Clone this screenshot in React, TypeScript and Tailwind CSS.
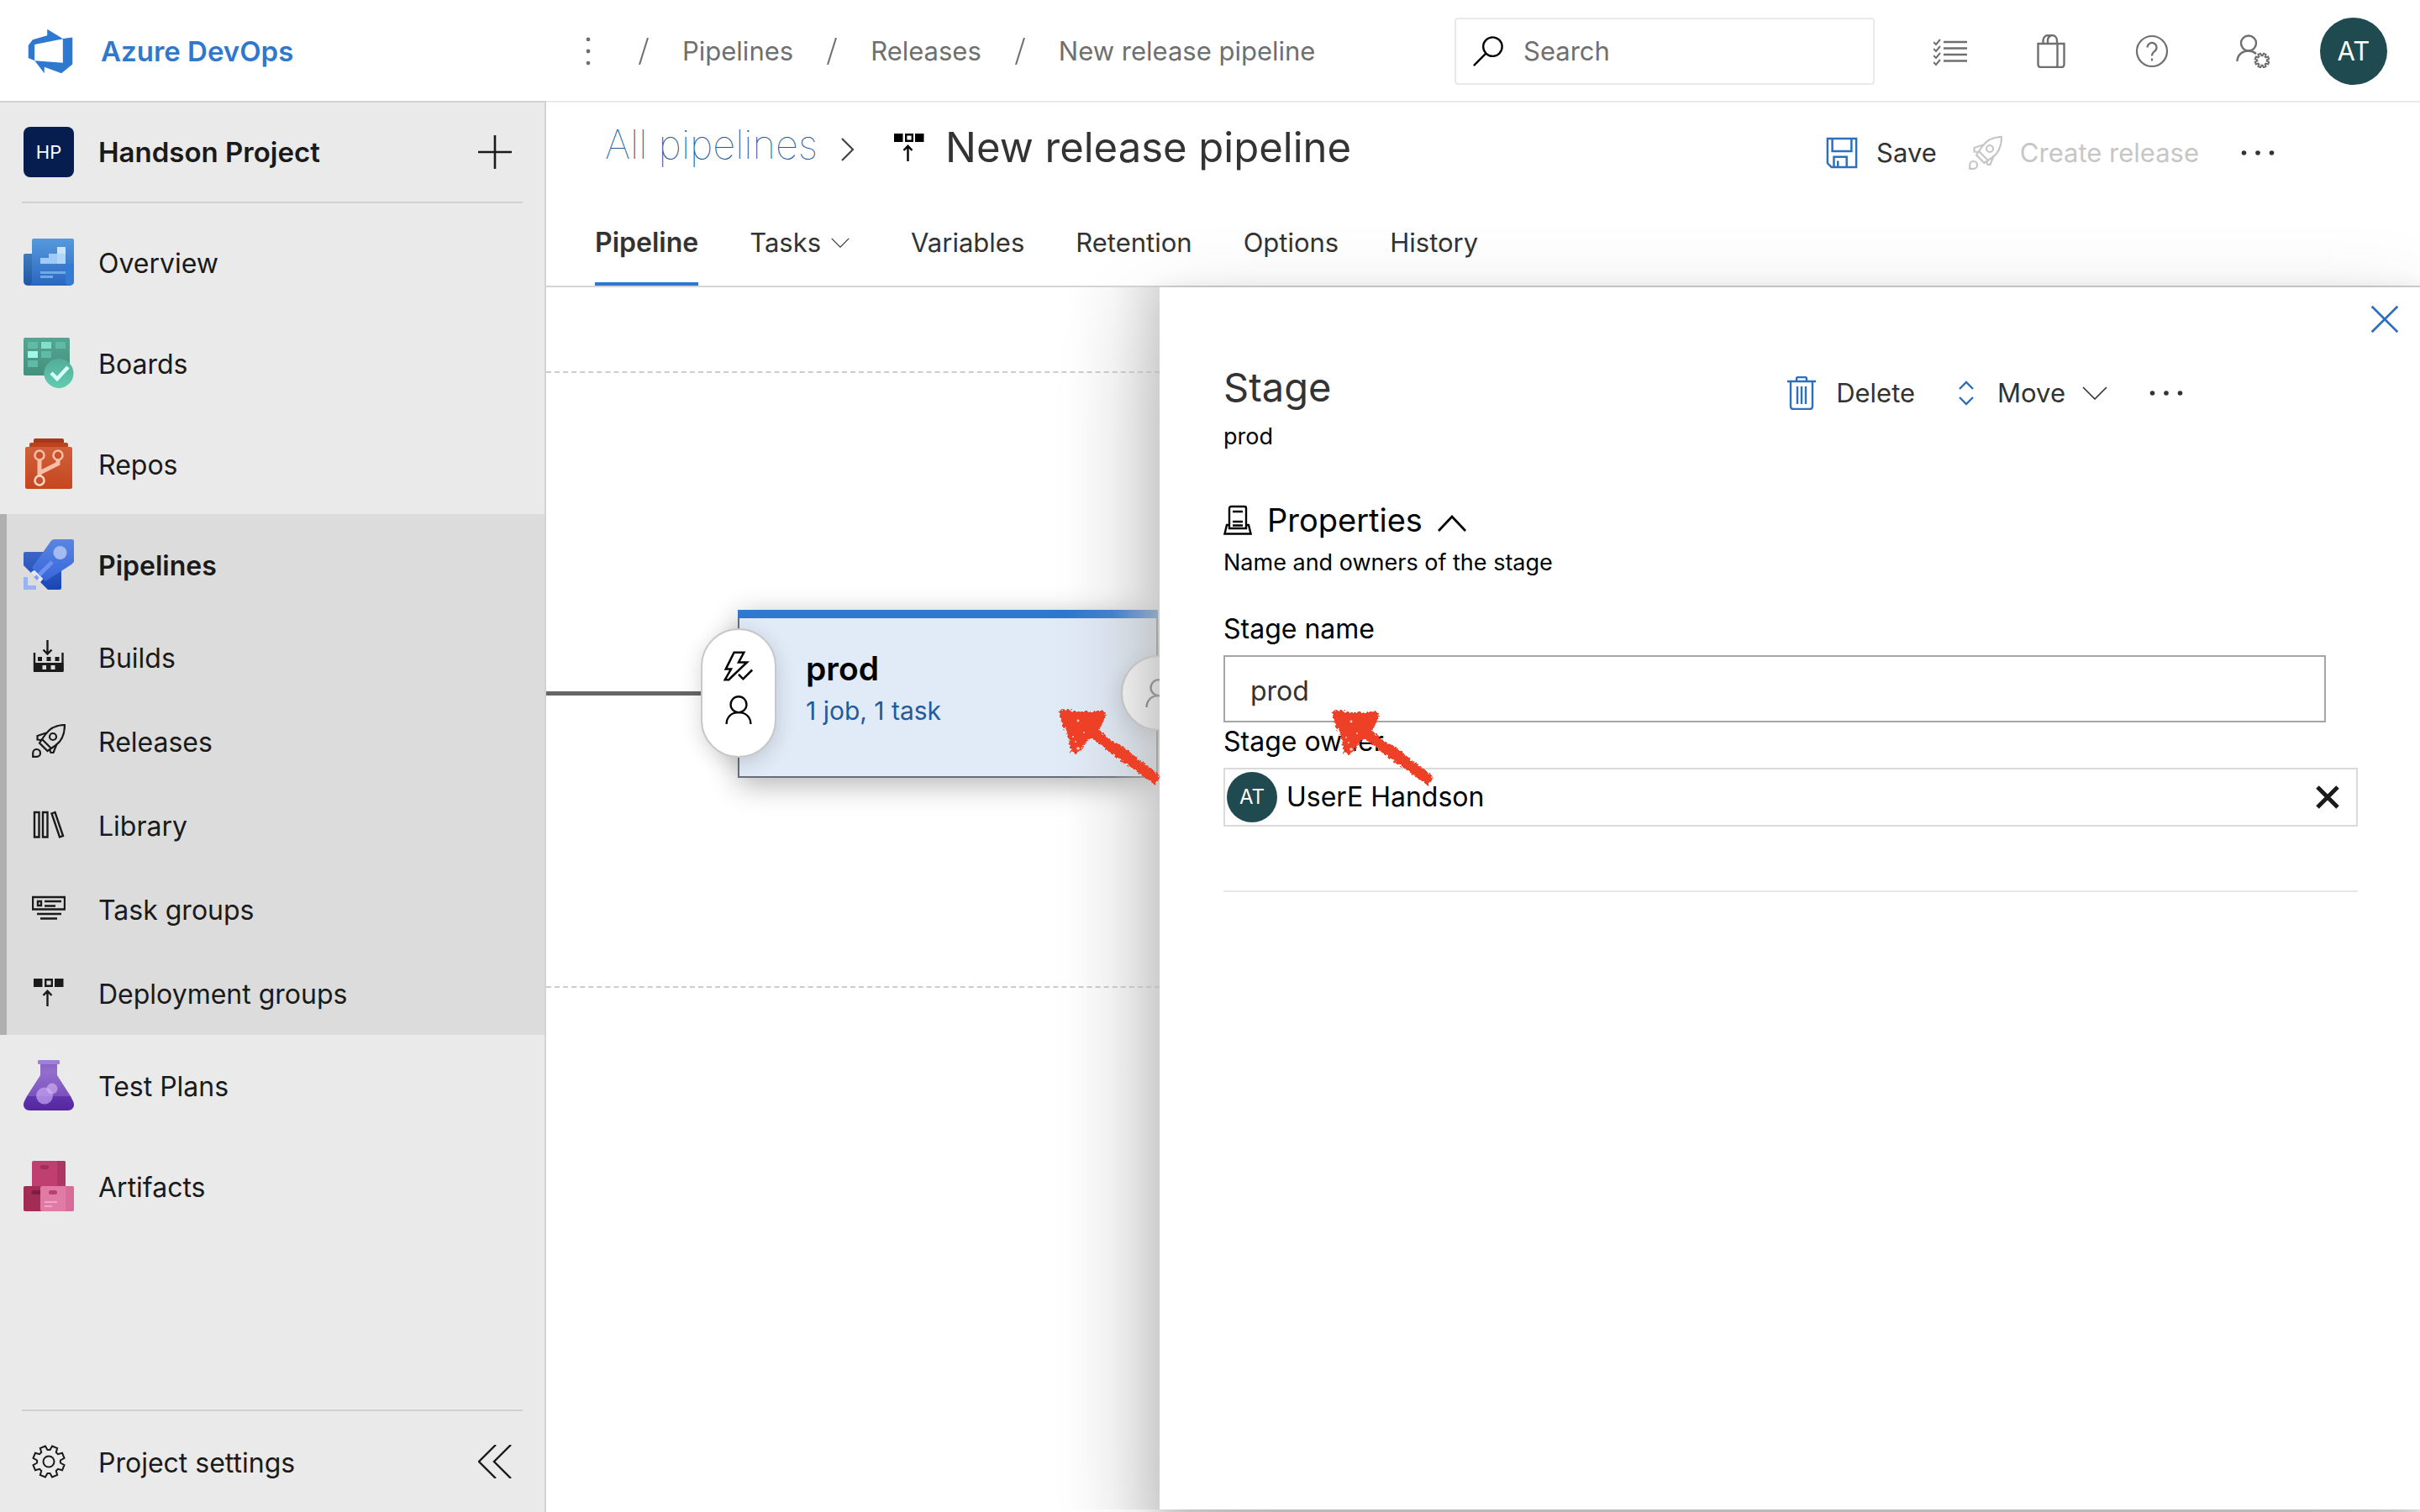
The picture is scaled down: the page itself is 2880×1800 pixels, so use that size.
import React, { type ReactNode } from "react";

/* ---------- icons ---------- */

type IconProps = { className?: string };

function Line({ className, box = "0 0 40 40", width = 2, children }: IconProps & { box?: string; width?: number; children: ReactNode }) {
  return (
    <svg viewBox={box} className={className} fill="none" stroke="currentColor" strokeWidth={width} aria-hidden="true">
      {children}
    </svg>
  );
}

function gearPath(cx: number, cy: number, outer: number, inner: number, teeth: number) {
  const pts: string[] = [];
  const step = (Math.PI * 2) / teeth;
  for (let i = 0; i < teeth; i++) {
    const c = step * (i + 0.5) - Math.PI / 2;
    const corners: [number, number][] = [
      [inner, -0.36],
      [outer, -0.22],
      [outer, 0.22],
      [inner, 0.36],
    ];
    for (const [r, t] of corners) {
      pts.push(`${(cx + r * Math.cos(c + t * step)).toFixed(2)} ${(cy + r * Math.sin(c + t * step)).toFixed(2)}`);
    }
  }
  return `M${pts.join("L")}Z`;
}

const DevOpsLogo = () => (
  <svg viewBox="0 0 16 16" className="size-[60px] text-[#2f78d0]" fill="currentColor" aria-hidden="true">
    <path d="M15 3.622v8.512L11.5 15l-5.425-1.975v1.958L3.004 10.97l8.951.7V4.005L15 3.622zm-2.984.428L6.994 1v2.001L2.382 4.356 1 6.13v4.029l1.978.873V5.869l9.038-1.818z" />
  </svg>
);

const OverviewIcon = () => (
  <svg viewBox="0 0 60 60" className="size-[60px]" aria-hidden="true">
    <defs>
      <linearGradient id="ov1" x2="0" y2="1"><stop stopColor="#569add" /><stop offset="1" stopColor="#2a67c0" /></linearGradient>
      <linearGradient id="ov2" x2="0" y2="1"><stop stopColor="#3f7dbb" /><stop offset="1" stopColor="#1f57a3" /></linearGradient>
    </defs>
    <path d="M2 20H14V58H5a5 5 0 0 1-5-5V22a2 2 0 0 1 2-2Z" fill="url(#ov2)" />
    <path d="M12 2H58a2 2 0 0 1 2 2V53a5 5 0 0 1-5 5H5a5 5 0 0 0 5-5V4a2 2 0 0 1 2-2Z" fill="url(#ov1)" />
    <path d="M50 32H60V53a5 5 0 0 1-10 0Z" fill="#337bd3" />
    <path d="M20 25H30V20H40V32H20Z" fill="#9fcbf8" />
    <path d="M40 12H50V20H40Z" fill="#cbe4fb" />
    <path d="M40 20H50V32H40Z" fill="#b0d6fa" />
    <path d="M20 41H50V44H20ZM20 46H35V49H20Z" fill="#6faae8" />
  </svg>
);

const BoardsIcon = () => (
  <svg viewBox="0 0 60 60" className="size-[60px]" aria-hidden="true">
    <defs>
      <linearGradient id="bo1" x2="0" y2="1"><stop stopColor="#57a592" /><stop offset="1" stopColor="#43917c" /></linearGradient>
      <linearGradient id="bo2" x2="0" y2="1"><stop stopColor="#54ac98" /><stop offset="1" stopColor="#61ccb2" /></linearGradient>
    </defs>
    <rect width="55" height="45" rx="2" fill="url(#bo1)" />
    <path d="M5 5H17V13H5ZM38 5H50V13H38ZM21 16H33V24H21ZM5 27H17V35H5Z" fill="#5fbba6" />
    <path d="M21 5H33V13H21Z" fill="#82dfcc" />
    <path d="M5 16H17V24H5Z" fill="#a3f7e8" />
    <circle cx="42" cy="42.500" r="17.500" fill="url(#bo2)" />
    <path d="M33 42L40 49L53 35" fill="none" stroke="#d6fff5" strokeWidth="4.500" />
  </svg>
);

const ReposIcon = () => (
  <svg viewBox="0 0 60 60" className="size-[60px]" aria-hidden="true">
    <defs>
      <linearGradient id="re1" x2="0" y2="1"><stop stopColor="#cf5f3a" /><stop offset="1" stopColor="#c64720" /></linearGradient>
    </defs>
    <rect x="12" width="36" height="20" rx="2" fill="#a9371a" />
    <rect x="7" y="5" width="46" height="20" rx="2" fill="#bd431d" />
    <rect x="2" y="10" width="56" height="50" rx="2" fill="url(#re1)" />
    <g fill="none" stroke="#f8bfa8" strokeWidth="5">
      <path d="M19 26V44M41 26V30L19 41" />
      <g strokeWidth="2.500" fill="#c9522c"><circle cx="19" cy="20" r="5.500" /><circle cx="41" cy="20" r="5.500" /><circle cx="19" cy="50" r="5.500" stroke="#ffd9c8" /></g>
    </g>
  </svg>
);

const PipelinesIcon = () => (
  <svg viewBox="0 0 60 60" className="size-[60px]" aria-hidden="true">
    <defs>
      <linearGradient id="pi1" x2="0" y2="1"><stop stopColor="#5a85e0" /><stop offset="1" stopColor="#3766da" /></linearGradient>
      <linearGradient id="pi2" x2="0" y2="1"><stop stopColor="#3c66c5" /><stop offset="1" stopColor="#1a46b4" /></linearGradient>
    </defs>
    <path d="M2 15H30L45 30V58a2 2 0 0 1-2 2H29L20 51L26 44L16 34L9 40L0 31V17a2 2 0 0 1 2-2Z" fill="url(#pi2)" />
    <path d="M36 0H58a2 2 0 0 1 2 2V27L57 30L26 50L10 34L33 1.500Z" fill="url(#pi1)" />
    <circle cx="43.500" cy="16" r="8" fill="#a4bbf2" />
    <path d="M34 27L15 46" stroke="#6d92ee" strokeWidth="5" />
    <path d="M9 39L13 37L23 47L20 51Z" fill="#e4e8f4" />
    <path d="M17 44L14 47" stroke="#7f9ff0" strokeWidth="5" />
    <path d="M0 45H5V55H15V60H0Z" fill="#9bb2f0" />
  </svg>
);

const TestPlansIcon = () => (
  <svg viewBox="0 0 60 60" className="size-[60px]" aria-hidden="true">
    <defs>
      <linearGradient id="tp1" x2="0" y2="1"><stop stopColor="#8661c5" /><stop offset=".3" stopColor="#936fcd" /><stop offset="1" stopColor="#7c50bd" /></linearGradient>
      <linearGradient id="tp2" x2="0" y2="1"><stop stopColor="#5f34ac" /><stop offset="1" stopColor="#5526a0" /></linearGradient>
    </defs>
    <path d="M20 2H40V18L56 43H4L20 18Z" fill="url(#tp1)" />
    <path d="M4 43H56L59 49C62 55 58 60 53 60H7C2 60-2 55 1 49Z" fill="url(#tp2)" />
    <rect x="17" width="26" height="5" rx="1" fill="#a07fd8" />
    <circle cx="25" cy="42.500" r="10" fill="#c8a6f3" fillOpacity=".7" />
    <circle cx="34" cy="34" r="6.500" fill="#d9bdf7" fillOpacity=".6" />
  </svg>
);

const ArtifactsIcon = () => (
  <svg viewBox="0 0 60 60" className="size-[60px]" aria-hidden="true">
    <rect x="10" width="40" height="34" rx="2" fill="#bf4070" />
    <path d="M40 0H48a2 2 0 0 1 2 2V30H40Z" fill="#ad3762" />
    <rect y="30" width="30" height="30" rx="2" fill="#a32c57" />
    <rect x="20" y="30" width="40" height="30" rx="2" fill="#e07ba5" />
    <path d="M50 30H58a2 2 0 0 1 2 2V58a2 2 0 0 1-2 2H50Z" fill="#d86c98" />
    <rect x="20" y="5" width="10" height="5" rx="2.500" fill="#9f2f58" />
    <path d="M12 35H20V40H12a2 2 0 0 1 0-5Z" fill="#7f1d40" />
    <rect x="30" y="35" width="10" height="5" rx="2.500" fill="#bb3f6e" />
    <path d="M25 48H40V50H25ZM25 53H34V55H25Z" fill="#f2a5c6" />
  </svg>
);

const BuildsIcon = () => (
  <Line className="size-10" width={2.4}>
    <path d="M18.500 0V16M13.500 11.500L18.500 16.500L23.500 11.500M3 15V37M36.500 15V37" />
    <path stroke="none" fill="currentColor" fillRule="evenodd" d="M2 27H37.500V38H2ZM12.500 30V35H17V30ZM22.500 30V35H27.500V30ZM7 20H12V25H7ZM17.500 20H22.500V25H17.500ZM27.500 20H32.500V25H27.500Z" />
  </Line>
);

const RocketIcon = ({ className }: IconProps) => (
  <Line className={className} width={2.2}>
    <path d="M39 1C30 1 21 5 15.500 13L9 22.500L18.500 32L28 25.500C36 20 39 11 39 1Z" />
    <circle cx="25" cy="15" r="4" />
    <path d="M17 10.500L6.500 14V18.500L11.500 19M29.500 24L25.500 34H22.500L21 30.500M12.500 18.500L22.500 28.500" />
    <path d="M1.200 38.800V34a4.400 4.400 0 1 1 4.600 4.800Z" />
  </Line>
);

const LibraryIcon = () => (
  <Line className="size-10" width={2.4}>
    <path d="M3 5H8.500V34.500H3ZM13 5H18.500V34.500H13ZM23.500 6.500L27.500 5L37 33L33 34.500Z" />
  </Line>
);

const TaskGroupsIcon = () => (
  <Line className="size-10" width={2.4}>
    <path d="M1 6H39V20.500H1ZM7 11H11V16H7ZM15 11H35M15 16.500H28M6 26H35M10 31.500H30" />
  </Line>
);

const DeployIcon = ({ className }: IconProps) => (
  <Line className={className} width={2.4}>
    <path d="M16.200 4.200H23.800V11.800H16.200ZM18.500 17.500V36M13.500 23L18.500 17.800L23.500 23" />
    <path stroke="none" fill="currentColor" d="M2 3H12.500V13H2ZM27 3H37.500V13H27Z" />
  </Line>
);

const GearIcon = () => (
  <Line className="size-10">
    <path d={gearPath(20, 20, 19, 14, 8)} />
    <circle cx="20" cy="20" r="6.500" />
  </Line>
);

const PersonIcon = ({ className }: IconProps) => (
  <Line className={className} width={2.6}>
    <circle cx="20" cy="13" r="10.500" />
    <path d="M4 39C4 29 11 23.500 20 23.500S36 29 36 39" />
  </Line>
);

const Dots = ({ className }: IconProps) => (
  <svg viewBox="0 0 40 8" className={className} fill="currentColor" aria-hidden="true">
    <circle cx="3.500" cy="4" r="2.800" /><circle cx="20" cy="4" r="2.800" /><circle cx="36.500" cy="4" r="2.800" />
  </svg>
);

const ChevronDown = ({ className }: IconProps) => (
  <Line className={className} box="0 0 30 16" width={1.6}><path d="M1 1L15 15L29 1" /></Line>
);

/* Hand-drawn marker arrow */
const MarkerArrow = ({ className }: IconProps) => (
  <svg viewBox="-4 -4 132 102" className={className} aria-hidden="true">
    <defs>
      <filter id="crayon" x="-10%" y="-10%" width="120%" height="120%">
        <feTurbulence type="fractalNoise" baseFrequency="0.35" numOctaves="2" seed="4" result="n" />
        <feDisplacementMap in="SourceGraphic" in2="n" scale="7" xChannelSelector="R" yChannelSelector="G" />
      </filter>
    </defs>
    <g filter="url(#crayon)" fill="#ed4025">
      <path d="M1 3L9 1L20 4L56 4L57 9L49 26L60 36L78 46L96 61L120 79L121 84L115 91L96 77L72 60L52 45L39 35L29 47L22 55L16 52L11 29L5 19Z" />
    </g>
    <g fill="#fff" fillOpacity=".75">
      <circle cx="24" cy="15" r="1.400" /><circle cx="18" cy="34" r="1" /><circle cx="24" cy="48" r="1.800" /><circle cx="31" cy="29" r="1" /><circle cx="21" cy="40" r="1" />
    </g>
  </svg>
);

/* ---------- sidebar ---------- */

function NavItem({ icon, label, bold }: { icon: ReactNode; label: string; bold?: boolean }) {
  return (
    <a href="#" className="flex h-[120px] items-center pl-5">
      <span className="flex w-[60px] justify-center">{icon}</span>
      <span className={bold ? "pt-1 pl-[29px] font-semibold" : "pt-1 pl-[29px]"}>{label}</span>
    </a>
  );
}

function SubItem({ icon, label }: { icon: ReactNode; label: string }) {
  return (
    <a href="#" className="flex h-[100px] items-center pl-5">
      <span className="flex w-[60px] justify-center">{icon}</span>
      <span className="pt-1 pl-[29px]">{label}</span>
    </a>
  );
}

function Sidebar() {
  return (
    <aside className="flex w-[650px] shrink-0 flex-col border-t-2 border-r-2 border-[#d3d3d3] bg-[#eaeaea] text-[32px] leading-10 text-[#1a1a1a]">
      <div className="mx-[26px] flex h-[120px] shrink-0 items-center border-b-2 border-[#d0d0d0] pl-[2px]">
        <span className="flex size-[60px] items-center justify-center rounded-lg bg-[#061e4f] text-[22px] text-white">HP</span>
        <span className="pl-[29px] text-[33px] font-semibold">Handson Project</span>
        <button className="mr-[13px] ml-auto" aria-label="Add">
          <Line className="size-10" width={2.6}><path d="M20 0V40M0 20H40" /></Line>
        </button>
      </div>
      <nav className="flex flex-col pt-[10px]">
        <div className="border-l-8 border-transparent">
          <NavItem icon={<OverviewIcon />} label="Overview" />
          <NavItem icon={<BoardsIcon />} label="Boards" />
          <NavItem icon={<ReposIcon />} label="Repos" />
        </div>
        <div className="border-l-8 border-[#b0b0b0] bg-[#dcdcdc]">
          <NavItem icon={<PipelinesIcon />} label="Pipelines" bold />
          <SubItem icon={<BuildsIcon />} label="Builds" />
          <SubItem icon={<RocketIcon className="size-10" />} label="Releases" />
          <SubItem icon={<LibraryIcon />} label="Library" />
          <SubItem icon={<TaskGroupsIcon />} label="Task groups" />
          <SubItem icon={<DeployIcon className="size-10" />} label="Deployment groups" />
        </div>
        <div className="border-l-8 border-transparent">
          <NavItem icon={<TestPlansIcon />} label="Test Plans" />
          <NavItem icon={<ArtifactsIcon />} label="Artifacts" />
        </div>
      </nav>
      <div className="mx-[26px] mt-auto flex h-[122px] items-center border-t-2 border-[#d0d0d0] pl-[2px]">
        <span className="flex w-[60px] justify-center"><GearIcon /></span>
        <a href="#" className="pt-1 pl-[29px]">Project settings</a>
        <button className="mr-[13px] ml-auto" aria-label="Collapse">
          <Line className="size-10" width={2.4}><path d="M21 0L1 20L21 40M39 0L19 20L39 40" /></Line>
        </button>
      </div>
    </aside>
  );
}

/* ---------- top bar ---------- */

const Slash = () => (
  <Line className="h-8 w-3" box="0 0 12 32"><path d="M11 0L1 32" /></Line>
);

function TopBar() {
  return (
    <header className="flex h-[120px] shrink-0 items-center bg-white pt-[2px] text-[31px] leading-10 text-[#6f6f6f]">
      <a href="#" className="flex w-[650px] shrink-0 items-center gap-[30px] pl-[30px] text-[33px] font-semibold text-[#2f78d0]">
        <DevOpsLogo />
        Azure DevOps
      </a>
      <nav className="flex items-center gap-10 pl-[30px] whitespace-nowrap" aria-label="Breadcrumb">
        <button aria-label="More" className="flex w-10 justify-center">
          <Dots className="h-2 w-[34px] rotate-90" />
        </button>
        <Slash />
        <a href="#">Pipelines</a>
        <Slash />
        <a href="#">Releases</a>
        <Slash />
        <a href="#">New release pipeline</a>
      </nav>
      <div className="ml-auto flex shrink-0 items-center gap-10 pr-[39px]">
        <label className="mr-[10px] flex h-20 w-[500px] items-center gap-6 rounded border-2 border-[#eaeaea] pl-5">
          <Line className="size-9 shrink-0 text-black" width={2.6}>
            <circle cx="26" cy="14" r="12.500" /><path d="M17 23L1 39" />
          </Line>
          <input type="search" aria-label="Search" placeholder="Search" className="w-full min-w-0 bg-transparent outline-none placeholder:text-[#6f6f6f]" />
        </label>
        <button aria-label="Work items" className="flex w-20 justify-center">
          <Line className="size-10" width={2.6}>
            <path d="M12 9H40M12 16.500H40M12 24H40M12 31.500H40" />
            <path strokeWidth="2" d="M0 9L3 12L8 6M0 17L3 20L8 14M0 25L3 28L8 22M0 33L3 36L8 30" />
          </Line>
        </button>
        <button aria-label="Marketplace" className="flex w-20 justify-center">
          <Line className="size-10" width={2.4}>
            <path d="M4.500 11H35.500V36a3 3 0 0 1-3 3H7.500a3 3 0 0 1-3-3ZM27.500 11V36a3 3 0 0 0 5 3M10.500 11V7a6 6 0 0 1 6-6H21a6 6 0 0 1 6 6V11M16 11V7a6 6 0 0 1 4-5.600" />
          </Line>
        </button>
        <button aria-label="Help" className="flex w-20 justify-center">
          <Line className="size-10" width={2.2}>
            <circle cx="20" cy="20" r="18" />
            <path d="M14.500 15.500a5.500 5.500 0 1 1 8.800 4.400C21 21.500 20 22.500 20 25.500" />
            <path d="M20 28.500V31.500" />
          </Line>
        </button>
        <button aria-label="User settings" className="flex w-20 justify-center">
          <Line className="size-10" width={2.4}>
            <circle cx="15" cy="10.500" r="9" />
            <path d="M1.500 32C1.500 24 8 19.500 15 19.500C18.500 19.500 21.500 21 24 23" />
            <path strokeWidth="2" d={gearPath(31, 31, 8.5, 5.8, 8)} />
          </Line>
        </button>
        <button className="flex size-20 items-center justify-center rounded-full bg-[#1e4a50] text-white">AT</button>
      </div>
    </header>
  );
}

/* ---------- page header ---------- */

const tabs = ["Variables", "Retention", "Options", "History"];

function PageHeader() {
  return (
    <div className="flex h-[222px] shrink-0 flex-col border-t-2 border-b-2 border-t-[#eaeaea] border-b-[#d4d4d4] whitespace-nowrap">
      <div className="flex h-[116px] items-center justify-between pr-[173px] pl-[70px]">
        <div className="flex items-center pb-2 leading-[60px]">
          <a href="#" className="pb-2 text-[47px] font-thin text-[#245a9c]">All pipelines</a>
          <Line className="mt-1 ml-7 h-7 w-4 text-[#444]" box="0 0 16 28" width={2.2}><path d="M1 1L14 14L1 27" /></Line>
          <DeployIcon className="ml-[45px] size-10 text-black" />
          <h1 className="pl-[23px] text-[49px] text-[#333]">New release pipeline</h1>
        </div>
        <div className="flex items-center gap-[38px] pt-1 text-[31px] leading-10 text-[#333]">
          <button className="flex items-center gap-[22px]">
            <Line className="size-[38px] text-[#2b6fbe]" width={2.6}>
              <path d="M2 2H38V38H7L2 33ZM8 2V18H32V2M10 38V25H26V38M15 30V38" />
            </Line>
            Save
          </button>
          <button disabled className="flex items-center gap-[21px] text-[#c6c6c6]">
            <RocketIcon className="size-10" />
            Create release
          </button>
          <button aria-label="More actions" className="pl-3"><Dots className="h-2 w-10" /></button>
        </div>
      </div>
      <nav className="flex h-[102px] gap-[61px] pl-[58px] text-[31px] leading-10 text-[#333]">
        <a href="#" className="flex items-center border-b-4 border-[#2f78d0] pt-1 text-[32px] font-semibold">Pipeline</a>
        <button className="mr-3 flex items-center gap-3 border-b-4 border-transparent pt-1">
          Tasks
          <ChevronDown className="h-3 w-[22px]" />
        </button>
        {tabs.map((t) => (
          <a key={t} href="#" className="flex items-center border-b-4 border-transparent pt-1">{t}</a>
        ))}
      </nav>
    </div>
  );
}

/* ---------- canvas ---------- */

function Canvas() {
  return (
    <div className="relative min-w-0 flex-1 overflow-hidden bg-white">
      <div className="absolute top-[100px] right-0 left-0 border-t-2 border-dashed border-[#ccc]" />
      <div className="absolute top-[832px] right-0 left-0 border-t-2 border-dashed border-[#ccc]" />
      <div className="absolute top-[481px] left-0 h-[5px] w-[200px] bg-[#666]" />
      <div className="absolute top-[384px] left-[228px] h-[200px] w-[500px] border-2 border-t-0 border-[#6a6f76] bg-[#e1ebf7] shadow-[0_8px_32px_rgba(0,0,0,0.3)]">
        <div className="-mx-[2px] h-[10px] bg-[#2f78d0]" />
        <div className="pt-9 pl-[79px]">
          <div className="text-[39px] leading-[48px] font-semibold text-black">prod</div>
          <a href="#" className="text-[30px] leading-[52px] text-[#245a9c]">1 job, 1 task</a>
        </div>
      </div>
      <button aria-label="Pre-deployment conditions" className="absolute top-[406px] left-[184px] flex h-[154px] w-[90px] flex-col items-center justify-center gap-4 rounded-full border-2 border-[#c8c8c8] bg-white pb-3 text-black shadow-[0_6px_24px_rgba(0,0,0,0.16)]">
        <Line className="size-9" width={2.8}>
          <path d="M14 2H27L20 15H31L7 38H2L10 24H3Z" />
          <path d="M20 31L26 37L38 25" />
        </Line>
        <PersonIcon className="size-9" />
      </button>
      <button aria-label="Post-deployment conditions" className="absolute top-[438px] left-[684px] flex size-[90px] items-center justify-center rounded-full border-2 border-[#c8c8c8] bg-white text-[#444] shadow-[0_6px_24px_rgba(0,0,0,0.16)]">
        <PersonIcon className="size-9" />
      </button>
    </div>
  );
}

/* ---------- stage panel ---------- */

function StagePanel() {
  return (
    <section className="relative z-10 mb-[3px] w-[1500px] shrink bg-white pr-[74px] pl-[76px] text-black shadow-[0_51px_115px_rgba(0,0,0,0.22),0_10px_29px_rgba(0,0,0,0.16)]">
      {/* Soft veil that mutes the canvas beside the panel */}
      <div className="pointer-events-none absolute top-0 right-full bottom-0 w-[110px] bg-linear-to-r from-[#d0d0d000] via-[#d0d0d026] to-[#cdcdcda6]" />
      <button aria-label="Close" className="absolute top-5 right-6 text-[#2b6fbe]">
        <Line className="size-9" width={3}><path d="M3 3L37 37M37 3L3 37" /></Line>
      </button>

      <div className="flex justify-between pt-[86px]">
        <div>
          <h2 className="text-[47px] leading-[66px] text-[#333]">Stage</h2>
          <p className="text-[27px] leading-[52px]">prod</p>
        </div>
        <div className="flex h-20 items-center pr-[208px] text-[31px] leading-10 text-[#333]">
          <button className="flex items-center gap-6">
            <Line className="h-10 w-[34px] text-[#2b6fbe]" box="0 0 34 40" width={2.4}>
              <path d="M0 6H34M11 6V3a2 2 0 0 1 2-2H21a2 2 0 0 1 2 2V6M4 6V36a3 3 0 0 0 3 3H27a3 3 0 0 0 3-3V6M12 12V33M17 12V33M22 12V33" />
            </Line>
            Delete
          </button>
          <button className="flex items-center pl-[52px]">
            <Line className="h-[30px] w-[18px] text-[#2b6fbe]" box="0 0 18 30" width={2.4}>
              <path d="M1 10L9 2L17 10M1 20L9 28L17 20" />
            </Line>
            <span className="pl-7">Move</span>
            <ChevronDown className="ml-5 h-4 w-[30px]" />
          </button>
          <button aria-label="More" className="pl-[50px]"><Dots className="h-2 w-10" /></button>
        </div>
      </div>

      <button className="mt-[45px] flex items-center" aria-expanded="true">
        <Line className="h-9 w-[34px]" box="0 0 34 36" width={2.4}>
          <path d="M7 28V4a2 2 0 0 1 2-2H25a2 2 0 0 1 2 2V28ZM11 8H23M11 20H23M11 24.500H23M7 24H4L1.500 34.500H32.500L30 24H27" />
        </Line>
        <span className="pl-[18px] text-[38px] leading-[56px]">Properties</span>
        <Line className="mt-2 ml-[18px] h-5 w-[34px]" box="0 0 34 20" width={2.8}><path d="M1 19L17 2L33 19" /></Line>
      </button>
      <p className="text-[27px] leading-[46px]">Name and owners of the stage</p>

      <div className="pt-[25px] text-[32px] leading-[62px]">
        <label htmlFor="stage-name" className="block">Stage name</label>
        <div className="relative mr-[38px]">
          <input id="stage-name" defaultValue="prod" className="block h-20 w-full border-2 border-[#a6a6a6] px-[30px] pt-1 text-[#333] outline-none" />
          <MarkerArrow className="absolute top-[60px] left-[124px] z-10 h-[102px] w-[132px]" />
        </div>
        <div className="pb-2 leading-[46px]">Stage owner</div>
        <div className="flex h-[70px] items-center border-2 border-[#dadada] pl-[2px]">
          <span className="flex size-[60px] items-center justify-center rounded-full bg-[#1e4a50] text-2xl text-white">AT</span>
          <span className="pl-[11px]">UserE Handson</span>
          <button aria-label="Remove owner" className="mr-5 ml-auto text-[#1a1a1a]">
            <Line className="size-7" box="0 0 28 28" width={5}><path d="M2 2L26 26M26 2L2 26" /></Line>
          </button>
        </div>
      </div>
      <hr className="mt-[76px] border-t-2 border-[#e8e8e8]" />
    </section>
  );
}

export default function App() {
  return (
    <div className="flex h-screen flex-col overflow-hidden bg-white font-['Inter',sans-serif]">
      <TopBar />
      <div className="flex min-h-0 flex-1">
        <Sidebar />
        <main className="flex min-w-0 flex-1 flex-col overflow-hidden">
          <PageHeader />
          <div className="relative flex min-h-0 flex-1">
            <Canvas />
            <StagePanel />
            <MarkerArrow className="absolute top-[497px] left-[605px] z-20 h-[102px] w-[132px]" />
          </div>
        </main>
      </div>
    </div>
  );
}
